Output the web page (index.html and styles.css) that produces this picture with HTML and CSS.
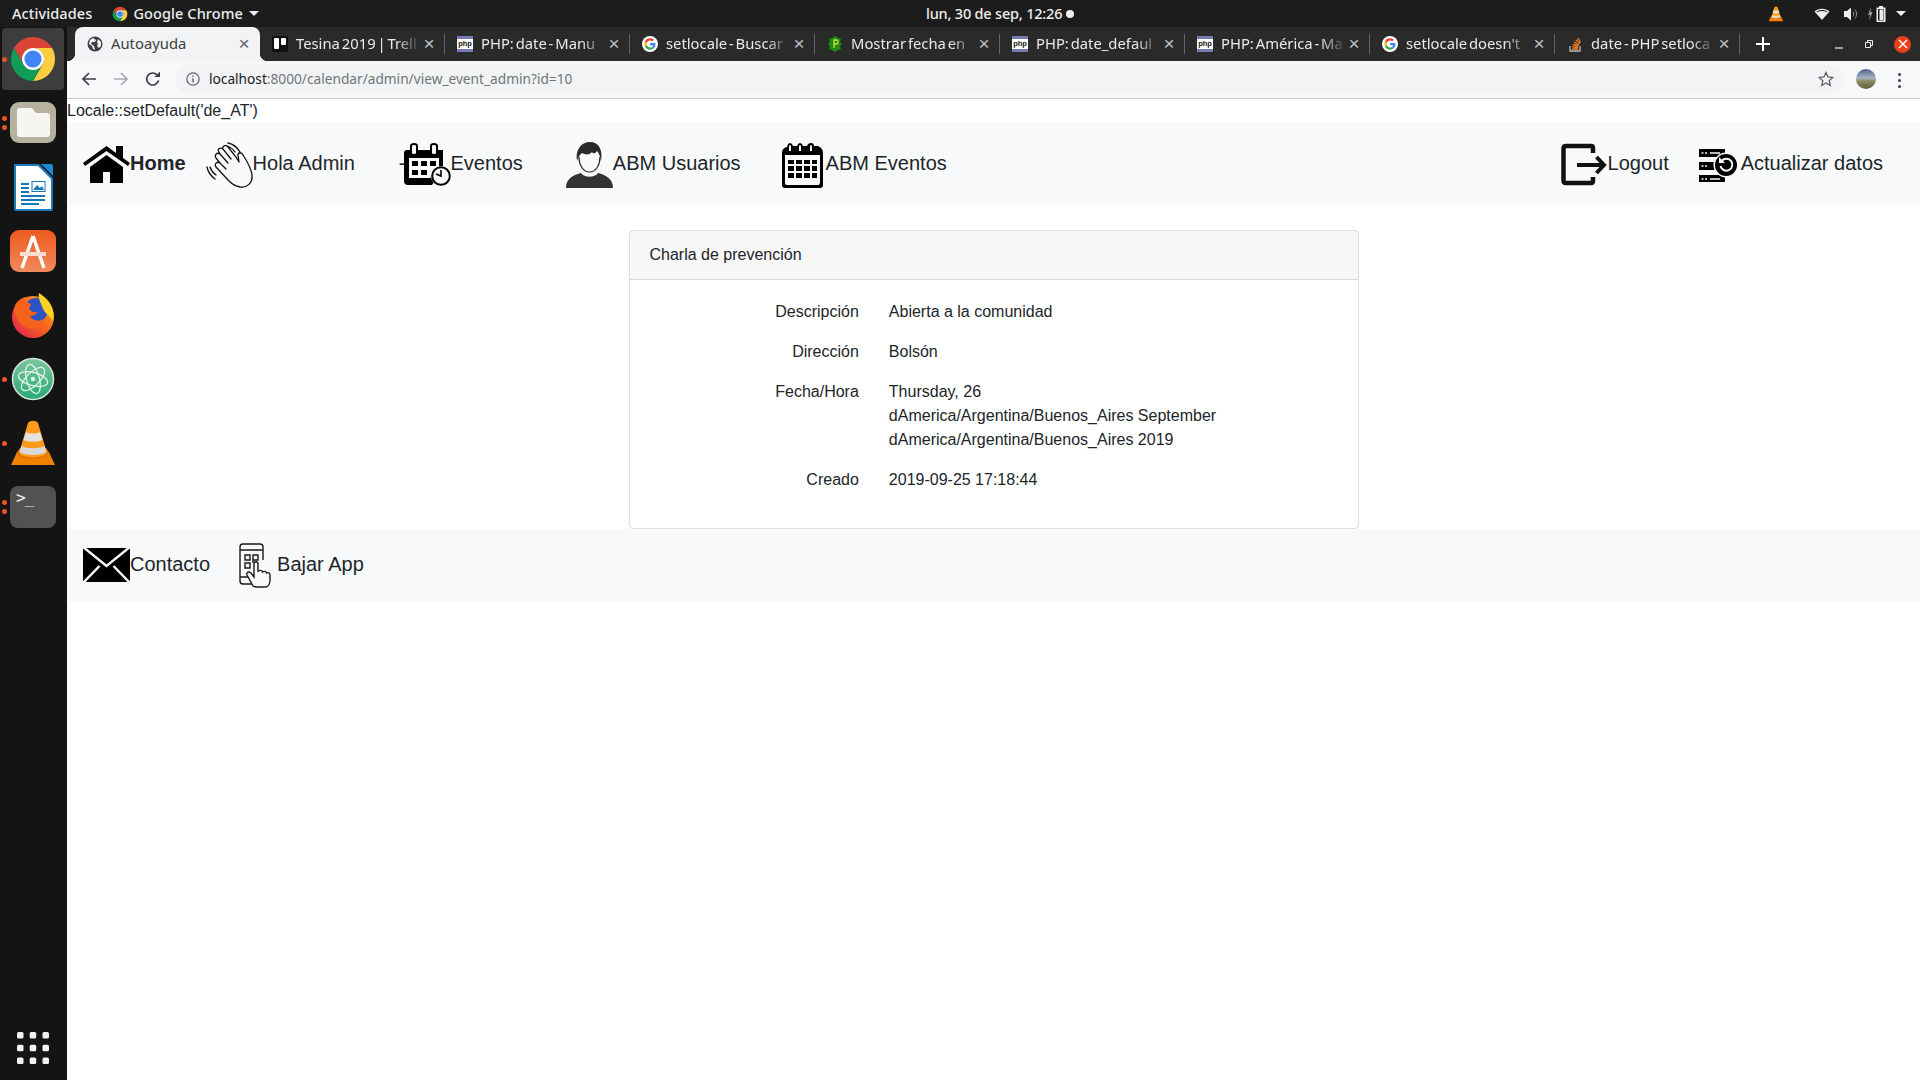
FILE: index.html
```html
<!DOCTYPE html>
<html lang="es">
<head>
    <meta charset="UTF-8">
    <title>Autoayuda</title>
    <link rel="stylesheet" href="styles.css">
</head>
<body>
    <svg class="sprite" width="0" height="0">
        <symbol id="fav-google" viewBox="0 0 48 48">
            <circle cx="24" cy="24" r="24" fill="#fff"/>
            <g transform="translate(7 7) scale(.71)">
                <path fill="#EA4335" d="M24 9.5c3.54 0 6.71 1.22 9.21 3.6l6.85-6.85C35.9 2.38 30.47 0 24 0 14.62 0 6.51 5.38 2.56 13.22l7.98 6.19C12.43 13.72 17.74 9.5 24 9.5z"/>
                <path fill="#4285F4" d="M46.98 24.55c0-1.57-.15-3.09-.38-4.55H24v9.02h12.94c-.58 2.96-2.26 5.48-4.78 7.18l7.73 6c4.51-4.18 7.09-10.36 7.09-17.65z"/>
                <path fill="#FBBC05" d="M10.53 28.59c-.48-1.45-.76-2.99-.76-4.59s.27-3.14.76-4.59l-7.98-6.19C.92 16.46 0 20.12 0 24c0 3.88.92 7.54 2.56 10.78l7.97-6.19z"/>
                <path fill="#34A853" d="M24 48c6.48 0 11.93-2.13 15.89-5.81l-7.73-6c-2.15 1.45-4.92 2.3-8.16 2.3-6.26 0-11.57-4.22-13.47-9.91l-7.98 6.19C6.51 42.62 14.62 48 24 48z"/>
            </g>
        </symbol>
        <symbol id="chrome-logo" viewBox="0 0 48 48">
            <path fill="#db4437" d="M4.95 13A22 22 0 0 1 43.05 13H24A11 11 0 0 0 14.5 29.5Z"/>
            <path fill="#ffcd40" d="M43.05 13A22 22 0 0 1 24 46L33.5 29.5A11 11 0 0 0 24 13Z"/>
            <path fill="#0f9d58" d="M24 46A22 22 0 0 1 4.95 13L14.5 29.5A11 11 0 0 0 33.5 29.5Z"/>
            <circle cx="24" cy="24" r="11" fill="#fff"/>
            <circle cx="24" cy="24" r="8.6" fill="#4285f4"/>
        </symbol>
        <symbol id="vlc-cone" viewBox="0 0 48 48">
            <path fill="#f08000" d="M2 46 8 33H40L46 46Z"/>
            <path fill="#e06c00" d="M8 33C9 42 39 42 40 33L37 29H11Z"/>
            <path fill="#ff9a1a" d="M19 4C21 1 27 1 29 4L38 34C34 40 14 40 10 34Z"/>
            <path fill="#e3e3e3" d="M17 13C20 15 28 15 31 13L33.500 21C29 23 19 23 14.500 21Z"/>
            <path fill="#d9d9d9" d="M12.500 27C18 30 30 30 35.500 27L37.500 33C32 37 16 37 10.500 33Z"/>
        </symbol>
    </svg>

    <!-- barra superior de ubuntu -->
    <header class="panel">
        <span class="panel-item panel-activities">Actividades</span>
        <span class="panel-item panel-app">
            <svg class="panel-chrome" viewBox="0 0 48 48"><use href="#chrome-logo"/></svg>
            Google Chrome
            <i class="caret"></i>
        </span>
        <span class="panel-clock">lun, 30 de sep, 12:26 <i class="clock-dot"></i></span>
        <div class="panel-tray">
            <svg class="tray-vlc" viewBox="0 0 48 48"><use href="#vlc-cone"/></svg>
            <svg class="tray-icon tray-wifi" viewBox="0 0 16 16"><path fill="#eee" d="M8 14 .5 5.500C4.500 1.800 11.500 1.800 15.500 5.500Z"/><path fill="#1c1c1c" d="M2.500 5.600C5.500 3.500 10.500 3.500 13.500 5.600L13 6.300C10 4.600 6 4.600 3 6.300Z"/></svg>
            <svg class="tray-icon tray-sound" viewBox="0 0 16 16"><path fill="#eee" d="M1 5H4L8 1.500V14.500L4 11H1Z"/><path fill="none" stroke="#999" d="M10 5.500C11 7 11 9 10 10.500M12 3.500C14 6 14 10 12 12.500"/></svg>
            <svg class="tray-icon tray-battery" viewBox="0 0 22 16"><path fill="#999" d="M4 1 1 9H3L2 15 5.500 6H3.500Z"/><path fill="#eee" d="M12 0H16V1.500H18.500V16H9.500V1.500H12ZM11 3V14.500H17V3Z"/><rect x="12.500" y="3.500" width="4" height="10.500" fill="#eee"/></svg>
            <i class="caret caret-tray"></i>
        </div>
    </header>

    <div class="desktop">
        <!-- dock -->
        <nav class="dock">
            <div class="dock-item dock-active">
                <i class="dot dot-one"></i>
                <svg class="dock-icon" viewBox="0 0 48 48"><use href="#chrome-logo"/></svg>
            </div>
            <div class="dock-item">
                <i class="dot dot-two-a"></i><i class="dot dot-two-b"></i>
                <svg class="dock-icon" viewBox="0 0 48 48">
                    <rect x="1" y="3" width="46" height="41" rx="9" fill="#b7b19f"/>
                    <path fill="#f7f5f2" d="M8 12Q8 9 11 9H23L27 14H38Q41 14 41 17V35Q41 38 38 38H11Q8 38 8 35Z"/>
                </svg>
            </div>
            <div class="dock-item">
                <svg class="dock-icon" viewBox="0 0 48 48">
                    <path fill="#1a7dbf" d="M5 2H30L44 16V47Q44 49 42 49H7Q5 49 5 47Z" transform="translate(0 -1)"/>
                    <path fill="#fff" d="M7 3H29L42 16V46H7Z"/>
                    <path fill="#1a8ad1" d="M32 1H42Q44 1 44 3V13Z"/>
                    <path stroke="#1577b5" stroke-width="2" d="M12 21H20M12 25H20M12 29H20M12 33H36M12 37H36M12 41H30"/>
                    <rect x="23" y="18.500" width="13" height="10" fill="#fff" stroke="#1577b5"/>
                    <path fill="#1577b5" d="M24 27 28 22 31 25 33 23 35 27Z"/>
                </svg>
            </div>
            <div class="dock-item">
                <svg class="dock-icon" viewBox="0 0 48 48">
                    <defs><linearGradient id="soft" x1="0" y1="0" x2="0" y2="1"><stop offset="0" stop-color="#ef5a1e"/><stop offset="1" stop-color="#f08a5c"/></linearGradient></defs>
                    <rect x="1" y="3" width="46" height="42" rx="9" fill="url(#soft)"/>
                    <path fill="none" stroke="#fff" stroke-width="3.500" d="M24 9 13 41M24 9 35 41"/>
                    <path stroke="#f8ddd0" stroke-width="4" d="M11 27H37"/>
                </svg>
            </div>
            <div class="dock-item">
                <svg class="dock-icon" viewBox="0 0 48 48">
                    <defs><linearGradient id="fox" x1="0" y1="1" x2="1" y2="0"><stop offset="0" stop-color="#e3175c"/><stop offset=".5" stop-color="#f5631b"/><stop offset="1" stop-color="#ffb51f"/></linearGradient></defs>
                    <circle cx="24" cy="26" r="21" fill="url(#fox)"/>
                    <circle cx="27" cy="19" r="12" fill="#2a53c6"/>
                    <path fill="#ffd21f" d="M30 2C40 8 47 18 44 30 40 24 35 22 33 15 31 11 29 6 30 2Z"/>
                    <path fill="#f5631b" d="M6 14C9 9 14 6 17 6 15 9 16 11 20 12 23 13 22 15 20 17 21 20 24 22 29 21 27 24 23 25 21 25 24 31 32 31 37 26 35 35 27 40 18 37 9 33 4 24 6 14Z"/>
                </svg>
            </div>
            <div class="dock-item">
                <i class="dot dot-one"></i>
                <svg class="dock-icon" viewBox="0 0 48 48">
                    <defs><linearGradient id="atom" x1="0" y1="0" x2="0" y2="1"><stop offset="0" stop-color="#7dc59a"/><stop offset="1" stop-color="#27ab78"/></linearGradient></defs>
                    <circle cx="24" cy="24" r="20.500" fill="url(#atom)" stroke="#d9e8df" stroke-width="1.500"/>
                    <g fill="none" stroke="#e6f4ec" stroke-width="1.300">
                        <ellipse cx="24" cy="24" rx="15" ry="6.500" transform="rotate(15 24 24)"/>
                        <ellipse cx="24" cy="24" rx="15" ry="6.500" transform="rotate(75 24 24)"/>
                        <ellipse cx="24" cy="24" rx="15" ry="6.500" transform="rotate(135 24 24)"/>
                    </g>
                    <circle cx="24" cy="24" r="2.200" fill="#e6f4ec"/>
                </svg>
            </div>
            <div class="dock-item">
                <i class="dot dot-one"></i>
                <svg class="dock-icon" viewBox="0 0 48 48"><use href="#vlc-cone"/></svg>
            </div>
            <div class="dock-item">
                <i class="dot dot-two-a"></i><i class="dot dot-two-b"></i>
                <div class="terminal-tile">&gt;_</div>
            </div>
            <div class="dock-apps">
                <svg viewBox="0 0 32 32" width="32" height="32" fill="#f2f2f2">
                    <rect x="0" y="0" width="6.500" height="6.500" rx="1.500"/><rect x="12.700" y="0" width="6.500" height="6.500" rx="1.500"/><rect x="25.500" y="0" width="6.500" height="6.500" rx="1.500"/>
                    <rect x="0" y="12.700" width="6.500" height="6.500" rx="1.500"/><rect x="12.700" y="12.700" width="6.500" height="6.500" rx="1.500"/><rect x="25.500" y="12.700" width="6.500" height="6.500" rx="1.500"/>
                    <rect x="0" y="25.500" width="6.500" height="6.500" rx="1.500"/><rect x="12.700" y="25.500" width="6.500" height="6.500" rx="1.500"/><rect x="25.500" y="25.500" width="6.500" height="6.500" rx="1.500"/>
                </svg>
            </div>
        </nav>

        <div class="browser">
            <!-- pestañas -->
            <div class="tabstrip">
                <div class="tab tab-active">
                    <svg class="favicon" viewBox="0 0 16 16"><circle cx="8" cy="8" r="7.500" fill="#3c4043"/><path fill="#f1f3f4" d="M6 2 9 4 8 6 5 6 4 8 7 10 8 14 6 13 5 10 2 8 3 4ZM11 3 14 6 14 10 12 12 10 10 11 8 10 6Z"/></svg>
                    <span class="tab-title">Autoayuda</span>
                    <span class="tab-close">×</span>
                </div>
                <div class="tab">
                    <svg class="favicon" viewBox="0 0 16 16"><rect width="16" height="16" rx="2" fill="#111"/><rect x="2" y="2" width="5" height="11" rx="1" fill="#fff"/><rect x="9" y="2" width="5" height="7" rx="1" fill="#fff"/></svg>
                    <span class="tab-title">Tesina 2019 | Trell</span>
                    <span class="tab-close">×</span>
                </div>
                <div class="tab">
                    <span class="favicon fav-php">php</span>
                    <span class="tab-title">PHP: date - Manu</span>
                    <span class="tab-close">×</span>
                </div>
                <div class="tab">
                    <svg class="favicon"><use href="#fav-google"/></svg>
                    <span class="tab-title">setlocale - Buscar</span>
                    <span class="tab-close">×</span>
                </div>
                <div class="tab">
                    <svg class="favicon" viewBox="0 0 16 16"><path fill="#1f8a12" d="M8 0 11 2 14 3 13 6 15 8 13 10 14 13 11 14 8 16 5 14 2 13 3 10 1 8 3 6 2 3 5 2Z"/><path fill="none" stroke="#c8e34a" stroke-width="1.300" d="M7 12V4H9.500Q11 4 11 6T9.500 8H7"/></svg>
                    <span class="tab-title">Mostrar fecha en</span>
                    <span class="tab-close">×</span>
                </div>
                <div class="tab">
                    <span class="favicon fav-php">php</span>
                    <span class="tab-title">PHP: date_defaul</span>
                    <span class="tab-close">×</span>
                </div>
                <div class="tab">
                    <span class="favicon fav-php">php</span>
                    <span class="tab-title">PHP: América - Ma</span>
                    <span class="tab-close">×</span>
                </div>
                <div class="tab">
                    <svg class="favicon"><use href="#fav-google"/></svg>
                    <span class="tab-title">setlocale doesn't</span>
                    <span class="tab-close">×</span>
                </div>
                <div class="tab">
                    <svg class="favicon" viewBox="0 0 16 16"><path fill="none" stroke="#bcbbbb" stroke-width="1.300" d="M3 10V15H13V10"/><path fill="none" stroke="#f48024" stroke-width="1.300" d="M5 13H11M5.200 10.800 11 11.500M5.800 8.500 11.300 10M7 6 12 9M8.800 3.800 12.800 7.800M11 2 13.500 6.500"/></svg>
                    <span class="tab-title">date - PHP setloca</span>
                    <span class="tab-close">×</span>
                </div>
                <span class="tab-new">
                    <svg viewBox="0 0 14 14" width="14" height="14"><path stroke="#fff" stroke-width="2" d="M7 0V14M0 7H14"/></svg>
                </span>
                <div class="window-buttons">
                    <svg viewBox="0 0 10 10" width="10" height="10"><path stroke="#eee" stroke-width="1.200" d="M1 9H9"/></svg>
                    <svg viewBox="0 0 10 10" width="10" height="10"><path fill="none" stroke="#eee" d="M1.500 3.500H6.500V8.500H1.500ZM3.500 3.500V1.500H8.500V6.500H6.500"/></svg>
                    <span class="window-close"><svg viewBox="0 0 10 10" width="10" height="10"><path stroke="#fff" stroke-width="1.500" d="M1 1 9 9M9 1 1 9"/></svg></span>
                </div>
            </div>

            <!-- barra de direcciones -->
            <div class="toolbar">
                <span class="tool-btn"><svg viewBox="0 0 16 16" width="16" height="16"><path fill="none" stroke="#3c4043" stroke-width="1.700" d="M15 8H2M8 2 2 8 8 14"/></svg></span>
                <span class="tool-btn"><svg viewBox="0 0 16 16" width="16" height="16"><path fill="none" stroke="#a8abae" stroke-width="1.700" d="M1 8H14M8 2 14 8 8 14"/></svg></span>
                <span class="tool-btn"><svg viewBox="0 0 16 16" width="16" height="16"><path fill="none" stroke="#3c4043" stroke-width="1.700" d="M13.500 9.500A6 6 0 1 1 12 3.800"/><path fill="#3c4043" d="M9.500 6H15V.5Z"/></svg></span>
                <div class="omnibox">
                    <svg class="omni-info" viewBox="0 0 16 16" width="14" height="14"><circle cx="8" cy="8" r="7" fill="none" stroke="#5f6368" stroke-width="1.400"/><path stroke="#5f6368" stroke-width="1.600" d="M8 7V12M8 4V5.700"/></svg>
                    <span class="omni-url"><b class="omni-host">localhost</b>:8000/calendar/admin/view_event_admin?id=10</span>
                    <svg class="omni-star" viewBox="0 0 16 16" width="16" height="16"><path fill="none" stroke="#5f6368" stroke-width="1.300" d="M8 1.500 10 6 14.800 6.500 11.200 9.700 12.200 14.500 8 12 3.800 14.500 4.800 9.700 1.200 6.500 6 6Z"/></svg>
                </div>
                <span class="avatar"></span>
                <span class="tool-menu"><i></i><i></i><i></i></span>
            </div>

            <!-- pagina -->
            <main class="page">
                <div class="locale-line">Locale::setDefault('de_AT')</div>

                <div class="navbar">
                    <a class="nav-link nav-home">
                        <svg class="nav-icon" viewBox="0 0 47 47"><path d="M0 21 23.500 4 33 11V4H40V16L47 21 45 24 23.500 9 2 24Z"/><path d="M7 25 23.500 13 40 25V41H27V30H20V41H7Z"/></svg>
                        Home
                    </a>
                    <a class="nav-link nav-hola">
                        <svg class="nav-icon" viewBox="0 0 47 47"><path fill="none" stroke="#111" stroke-width="1.300" stroke-linecap="round" d="M37 13C41 19 45 26 46 33 47 41 41 46 34 45 29 44 26 42 23 39L10 25C8 22 11 19 14 21L20 27M14 21 10 16C8 13 11 10 14 12L22 21M14 12 13 10C11 7 14 5 17 7L25 17M17 7C16 4 20 2 22 5L30 15 33 20M33 20 32 13C32 10 36 10 37 13M22 1C27 2 31 5 34 10M21 4C24 5 27 7 29 10M1 25C2 30 5 34 9 37M4 25C5 28 7 31 10 33"/></svg>
                        Hola Admin
                    </a>
                    <a class="nav-link nav-eventos">
                        <span class="nav-dash">-</span>
                        <svg class="nav-icon" viewBox="0 0 47 47">
                            <path d="M3 8H6V4Q6 1 10 1T14 4V8H26V4Q26 1 30 1T34 4V8H39V28L28 43H4Q0 43 0 39V11Q0 8 3 8Z"/>
                            <path fill="#f8f9fa" d="M8 4Q8 3 10 3T12 4V11Q12 12 10 12T8 11ZM28 4Q28 3 30 3T32 4V11Q32 12 30 12T28 11ZM5 16H35V30L26 36H5Z"/>
                            <path d="M8 19H14V24H8ZM17 19H23V24H17ZM26 19H32V24H26ZM8 28H14V33H8ZM17 28H23V33H17Z"/>
                            <circle cx="37" cy="34" r="10" fill="#f8f9fa"/><circle cx="37" cy="34" r="8.800" fill="none" stroke="#000" stroke-width="2"/>
                            <path fill="none" stroke="#000" stroke-width="1.600" d="M37 28V34L32 32"/>
                        </svg>
                        Eventos
                    </a>
                    <a class="nav-link nav-usuarios">
                        <svg class="nav-icon" viewBox="0 0 47 47">
                            <path fill="#333" d="M0 46C0 36 8 33 15 31 18 36 29 36 32 31 39 33 47 36 47 46Z"/>
                            <path fill="none" stroke="#222" stroke-width="1.200" d="M13 15C13 23 17 30 23.500 30S34 23 34 15"/>
                            <path fill="#2a2a2a" d="M11 19C9 8 15 0 24 0 33 0 37 8 35 19 34 14 33 11 31 9 29 12 27 12 26 10 24 13 19 13 16 11 13 13 12 16 11 19Z"/>
                        </svg>
                        ABM Usuarios
                    </a>
                    <a class="nav-link nav-abm">
                        <svg class="nav-icon" viewBox="0 0 47 47">
                            <path d="M3 11Q3 6 8 5 9 1 11 1T14 4H18Q19 1 21 1T24 4H28Q29 1 32 1T35 4H39Q44 6 44 11V43Q44 46 41 46H6Q3 46 3 43Z"/>
                            <path fill="#f8f9fa" d="M6 13H41V41Q41 43 39 43H8Q6 43 6 41ZM10 5Q10 3 11 3T12 5V9H10ZM20 5Q20 3 21 3T22 5V9H20ZM31 5Q31 3 32 3T33 5V9H31Z"/>
                            <path d="M9 18H15V22H9ZM17 18H23V22H17ZM25 18H31V22H25ZM33 18H38V22H33ZM9 24H15V29H9ZM17 24H23V29H17ZM25 24H31V29H25ZM33 24H38V29H33ZM9 31H15V36H9ZM17 31H23V36H17ZM25 31H31V36H25ZM33 31H38V36H33Z"/>
                        </svg>
                        ABM Eventos
                    </a>
                    <a class="nav-link nav-logout">
                        <svg class="nav-icon" viewBox="0 0 47 47">
                            <path fill="none" stroke="#111" stroke-width="4.500" d="M32 11V6Q32 4 30 4H5Q2.500 4 2.500 6.500V38.500Q2.500 41 5 41H30Q32 41 32 39V35"/>
                            <path fill="none" stroke="#111" stroke-width="4" d="M16 23H42M35.500 15 43 23 35.500 31"/>
                        </svg>
                        Logout
                    </a>
                    <a class="nav-link nav-actualizar">
                        <svg class="nav-icon" viewBox="0 0 47 47">
                            <path d="M5 7H31V15H5ZM5 20H24V28H5ZM5 33H31V40H5Z"/>
                            <path stroke="#f8f9fa" stroke-width="1.400" d="M7.500 11H9.500M11 11H13M16 11H26M7.500 24H9.500M11 24H13M7.500 37H9.500M11 37H13M16 37H26"/>
                            <circle cx="32" cy="23" r="12.500" fill="#f8f9fa"/><circle cx="32" cy="23" r="11"/>
                            <path fill="none" stroke="#f8f9fa" stroke-width="2" d="M28 18.500A6 6 0 1 1 26.500 24"/><path fill="#f8f9fa" d="M25 15V21H31Z"/>
                        </svg>
                        Actualizar datos
                    </a>
                </div>

                <div class="content">
                    <div class="card">
                        <div class="card-header">Charla de prevención</div>
                        <div class="card-body">
                            <div class="field">
                                <div class="field-label">Descripción</div>
                                <div class="field-value">Abierta a la comunidad</div>
                            </div>
                            <div class="field">
                                <div class="field-label">Dirección</div>
                                <div class="field-value">Bolsón</div>
                            </div>
                            <div class="field">
                                <div class="field-label">Fecha/Hora</div>
                                <div class="field-value">Thursday, 26 dAmerica/Argentina/Buenos_Aires September dAmerica/Argentina/Buenos_Aires 2019</div>
                            </div>
                            <div class="field">
                                <div class="field-label">Creado</div>
                                <div class="field-value">2019-09-25 17:18:44</div>
                            </div>
                        </div>
                    </div>
                </div>

                <div class="footer-bar">
                    <a class="nav-link">
                        <svg class="nav-icon" viewBox="0 0 47 47">
                            <rect y="6" width="47" height="34"/>
                            <path fill="none" stroke="#f8f9fa" stroke-width="2.500" d="M0 5 23.500 24 47 5M0 41 16.500 24M47 41 30.500 24"/>
                        </svg>
                        Contacto
                    </a>
                    <a class="nav-link nav-app">
                        <svg class="nav-icon" viewBox="0 0 47 47">
                            <g fill="none" stroke="#1a1a1a" stroke-width="1.400">
                                <path d="M24 42H11Q8 42 8 39V5Q8 2 11 2H28Q31 2 31 5V18M8 8H31M8 35H17"/>
                                <path d="M13 13H18V18H13ZM21 13H26V18H21ZM13 21H18V26H13ZM21 21V17"/>
                                <path fill="#f8f9fa" d="M21 44 15 33C14 30 17 29 19 31L22 35V22C22 19 26 19 26 22V29C28 28 30 28 30.500 30 32 29 34 29 34.500 31 36 30 38 31 38 33V38C38 42 36 45 33 45H25Q22 45 21 44Z"/>
                            </g>
                        </svg>
                        Bajar App
                    </a>
                </div>
            </main>
        </div>
    </div>
</body>
</html>
```

FILE: styles.css
```css
* {
    box-sizing: border-box;
}
body {
    margin: 0;
    height: 100vh;
    overflow: hidden;
    font-family: "Liberation Sans", Arial, sans-serif;
    font-size: 16px;
    line-height: 24px;
    color: #212529;
    background-color: #fff;
}
.sprite {
    position: absolute;
}

/* barra superior */
.panel {
    height: 27px;
    background-color: #1c1c1c;
    color: #eee;
    font-family: "Noto Sans", sans-serif;
    font-size: 14.5px;
    font-weight: 500;
    line-height: 27px;
    display: flex;
    align-items: center;
    position: relative;
}
.panel-item {
    display: flex;
    align-items: center;
}
.panel-activities {
    margin-left: 12px;
    letter-spacing: .1px;
}
.panel-app {
    margin-left: 20px;
    letter-spacing: .1px;
}
.panel-chrome {
    width: 16px;
    height: 16px;
    margin-right: 5px;
}
.caret {
    width: 0;
    height: 0;
    margin-left: 6px;
    border-left: 5px solid transparent;
    border-right: 5px solid transparent;
    border-top: 5px solid #eee;
}
.panel-clock {
    position: absolute;
    left: 926px;
    display: flex;
    align-items: center;
    gap: 4px;
    letter-spacing: -.2px;
}
.clock-dot {
    width: 8px;
    height: 8px;
    border-radius: 50%;
    background-color: #eee;
}
.panel-tray {
    margin-left: auto;
    display: flex;
    align-items: center;
    padding-right: 14px;
}
.tray-vlc {
    width: 16px;
    height: 18px;
    margin-right: 30px;
}
.tray-icon {
    height: 16px;
}
.tray-wifi {
    width: 16px;
    margin-right: 13px;
}
.tray-sound {
    width: 16px;
    margin-right: 8px;
}
.tray-battery {
    width: 22px;
}
.caret-tray {
    margin-left: 7px;
}

/* dock */
.desktop {
    display: flex;
    height: calc(100vh - 27px);
}
.dock {
    width: 67px;
    flex-shrink: 0;
    background-color: #141414;
    display: flex;
    flex-direction: column;
    position: relative;
}
.dock-item {
    height: 64px;
    display: flex;
    align-items: center;
    justify-content: center;
    padding-right: 1px;
    position: relative;
}
.dock-active::before {
    content: "";
    position: absolute;
    left: 2px;
    top: 1px;
    width: 62px;
    height: 62px;
    border-radius: 4px;
    background-color: #3d3d3d;
}
.dock-icon {
    width: 48px;
    height: 48px;
    position: relative;
}
.dot {
    position: absolute;
    left: 2px;
    width: 5px;
    height: 5px;
    border-radius: 50%;
    background-color: #e95420;
    z-index: 1;
}
.dot-one {
    top: 30px;
}
.dot-two-a {
    top: 25px;
}
.dot-two-b {
    top: 34px;
}
.terminal-tile {
    width: 46px;
    height: 42px;
    border-radius: 8px;
    background-color: #525252;
    color: #eee;
    font-family: "DejaVu Sans Mono", monospace;
    font-size: 16px;
    line-height: 16px;
    padding: 4px 6px;
    letter-spacing: -1px;
}
.dock-apps {
    margin-top: auto;
    height: 64px;
    display: flex;
    align-items: center;
    justify-content: center;
    padding-right: 2px;
}

/* navegador */
.browser {
    flex: 1;
    min-width: 0;
    display: flex;
    flex-direction: column;
}
.tabstrip {
    height: 34px;
    background-color: #2b2a2b;
    display: flex;
    padding-left: 8px;
    position: relative;
}
.tab {
    width: 185px;
    height: 34px;
    flex-shrink: 0;
    display: flex;
    align-items: center;
    padding: 0 7px 0 12px;
    color: #e8eaed;
    font-family: "Noto Sans", sans-serif;
    font-size: 14.8px;
    word-spacing: -2px;
    position: relative;
}
.tab:not(.tab-active)::after {
    content: "";
    position: absolute;
    right: 0;
    top: 7px;
    height: 20px;
    width: 1px;
    background-color: #5f6368;
}
.tab-active {
    background-color: #f1f3f4;
    color: #3c4043;
    border-radius: 8px 8px 0 0;
}
.tab-active::before,
.tab-active::after {
    content: "";
    position: absolute;
    bottom: 0;
    width: 8px;
    height: 8px;
}
.tab-active::before {
    left: -8px;
    background: radial-gradient(circle at 0 0, transparent 8px, #f1f3f4 8.5px);
}
.tab-active::after {
    right: -8px;
    background: radial-gradient(circle at 100% 0, transparent 8px, #f1f3f4 8.5px);
}
.favicon {
    width: 16px;
    height: 16px;
    flex-shrink: 0;
    margin-right: 8px;
}
.fav-php {
    background: linear-gradient(#777bb3 3px, #fff 3px, #fff 13px, #777bb3 13px);
    color: #111;
    font-family: "Liberation Sans", sans-serif;
    font-size: 7.5px;
    font-weight: 700;
    line-height: 16px;
    text-align: center;
    word-spacing: 0;
}
.tab-title {
    flex: 1;
    white-space: nowrap;
    overflow: hidden;
    margin-bottom: 2px;
    -webkit-mask-image: linear-gradient(to right, #000 80%, transparent 100%);
    mask-image: linear-gradient(to right, #000 80%, transparent 100%);
}
.tab-active .tab-title {
    -webkit-mask-image: none;
    mask-image: none;
}
.tab-close {
    width: 16px;
    text-align: center;
    font-family: "Liberation Sans", sans-serif;
    font-size: 19px;
    line-height: 16px;
    color: #bdc1c6;
    margin-right: 1px;
    flex-shrink: 0;
}
.tab-active .tab-close {
    color: #5f6368;
}
.tab-new {
    margin-left: 16px;
    display: flex;
    align-items: center;
}
.window-buttons {
    margin-left: auto;
    display: flex;
    align-items: center;
    gap: 20px;
    padding-right: 9px;
}
.window-close {
    width: 17px;
    height: 17px;
    border-radius: 50%;
    background-color: #e9401a;
    display: flex;
    align-items: center;
    justify-content: center;
}
.toolbar {
    height: 38px;
    background-color: #f7f8f9;
    border-bottom: 1px solid #c4c8cc;
    display: flex;
    align-items: flex-start;
    padding: 4px 0 0 6px;
}
.tool-btn {
    width: 32px;
    height: 28px;
    display: flex;
    align-items: center;
    justify-content: center;
}
.omnibox {
    width: 1669px;
    height: 28px;
    margin-left: 6px;
    border-radius: 14px;
    background-color: #f1f3f4;
    display: flex;
    align-items: center;
    padding: 0 10px 0 11px;
}
.omni-url {
    margin-left: 9px;
    color: #70757a;
    font-family: "Noto Sans", sans-serif;
    font-size: 13.7px;
    white-space: nowrap;
}
.omni-host {
    color: #202124;
    font-weight: 400;
}
.omni-star {
    margin-left: auto;
}
.avatar {
    width: 20px;
    height: 20px;
    margin: 4px 0 0 12px;
    border-radius: 50%;
    background: linear-gradient(#4d5f85 0%, #a9b4c4 45%, #8a8a63 60%, #62623e 100%);
}
.tool-menu {
    margin: 8px 0 0 22px;
    display: flex;
    flex-direction: column;
    gap: 3px;
}
.tool-menu i {
    width: 3px;
    height: 3px;
    border-radius: 50%;
    background-color: #3c4043;
}

/* pagina */
.page {
    flex: 1;
    min-height: 0;
}
.locale-line {
    height: 24px;
}
.navbar {
    height: 83px;
    background-color: #f8f9fa;
    display: flex;
    align-items: center;
    padding: 2px 37px 0 16px;
    font-size: 20px;
}
.nav-link {
    display: flex;
    align-items: flex-start;
    line-height: 42px;
    white-space: nowrap;
    color: #212529;
}
.nav-icon {
    width: 47px;
    height: 47px;
    flex-shrink: 0;
}
.nav-home {
    font-weight: 700;
}
.nav-hola {
    margin-left: 20px;
}
.nav-eventos {
    margin-left: 44px;
}
.nav-dash {
    margin-right: -2px;
}
.nav-usuarios {
    margin-left: 43px;
}
.nav-abm {
    margin-left: 38px;
}
.nav-logout {
    margin-left: auto;
}
.nav-actualizar {
    margin-left: 25px;
}
.content {
    padding-top: 24px;
}
.card {
    width: 730px;
    margin: 0 auto;
    border: 1px solid rgba(0, 0, 0, .125);
    border-radius: 4px;
}
.card-header {
    padding: 12px 20px;
    background-color: rgba(0, 0, 0, .03);
    border-bottom: 1px solid rgba(0, 0, 0, .125);
}
.card-body {
    padding: 20px;
}
.field {
    display: flex;
    margin: 0 -15px 16px;
}
.field-label {
    width: 33.3333%;
    padding: 0 15px;
    text-align: right;
}
.field-value {
    width: 50%;
    padding: 0 15px;
}
.footer-bar {
    height: 73px;
    background-color: #f8f9fa;
    display: flex;
    align-items: center;
    padding: 0 16px;
    font-size: 20px;
}
.footer-bar .nav-link {
    line-height: 44px;
}
.nav-app {
    margin-left: 22px;
}
.nav-app .nav-icon {
    margin-right: -2px;
}
```
